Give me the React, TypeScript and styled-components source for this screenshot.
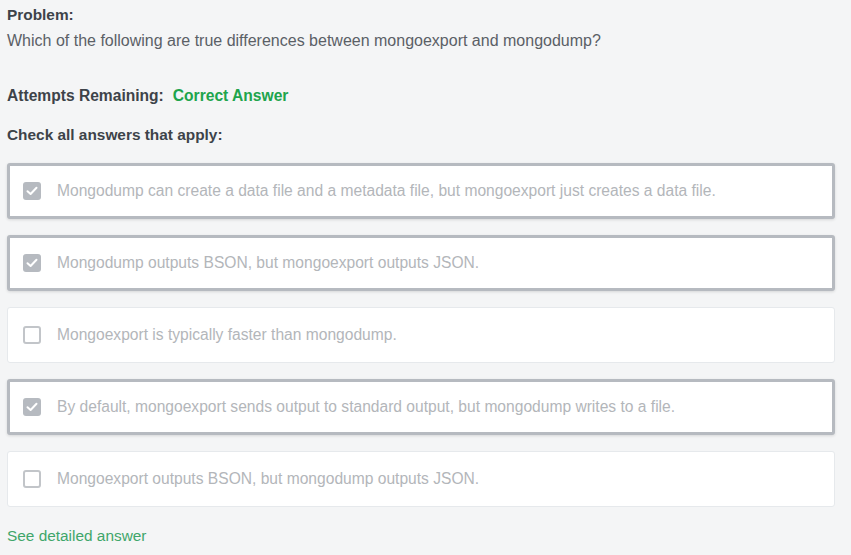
import React from 'react';
import styled, { createGlobalStyle } from 'styled-components';

const GlobalStyle = createGlobalStyle`
  html, body {
    margin: 0;
    padding: 0;
    background: #f4f5f6;
  }
  body {
    font-family: 'Liberation Sans', Arial, sans-serif;
  }
`;

const Page = styled.div`
  width: 851px;
  height: 555px;
  box-sizing: border-box;
  padding: 5px 16px 0 7px;
  overflow: hidden;
  color: #3d4349;
`;

const Label = styled.div`
  font-size: 15.4px;
  font-weight: bold;
  color: #3d4349;
  line-height: 20px;
`;

const Question = styled.div`
  font-size: 16px;
  color: #5b6066;
  line-height: 20px;
  margin-top: 6px;
`;

const Attempts = styled.div`
  display: flex;
  gap: 9px;
  margin-top: 35px;
  font-size: 15.6px;
  font-weight: bold;
  line-height: 20px;
`;

const Correct = styled.span`
  color: #20a44c;
`;

const Instruction = styled(Label)`
  margin-top: 19px;
`;

const List = styled.div`
  display: flex;
  flex-direction: column;
  gap: 16px;
  margin-top: 18px;
`;

const Option = styled.div<{ $checked: boolean }>`
  display: flex;
  align-items: center;
  gap: 16px;
  height: 56px;
  box-sizing: border-box;
  padding-left: ${(p) => (p.$checked ? '13px' : '15px')};
  background: #fff;
  border: ${(p) => (p.$checked ? '3px solid #b6bac0' : '1px solid #e6e9ec')};
  border-radius: 3px;
  box-shadow: ${(p) => (p.$checked ? '0 1px 3px rgba(0,0,0,0.12)' : 'none')};
`;

const Box = styled.span<{ $checked: boolean }>`
  flex: none;
  width: 18px;
  height: 18px;
  box-sizing: border-box;
  border-radius: 3px;
  display: flex;
  align-items: center;
  justify-content: center;
  background: ${(p) => (p.$checked ? '#b6bac0' : '#fff')};
  border: ${(p) => (p.$checked ? 'none' : '2px solid #c2c5c9')};
`;

const OptionText = styled.span`
  font-size: 15.6px;
  color: #b3b6ba;
  line-height: 20px;
`;

const DetailLink = styled.a`
  display: block;
  margin-top: 19px;
  font-size: 15.4px;
  color: #3fa66a;
  text-decoration: none;
  line-height: 20px;
`;

const options = [
  { text: 'Mongodump can create a data file and a metadata file, but mongoexport just creates a data file.', checked: true },
  { text: 'Mongodump outputs BSON, but mongoexport outputs JSON.', checked: true },
  { text: 'Mongoexport is typically faster than mongodump.', checked: false },
  { text: 'By default, mongoexport sends output to standard output, but mongodump writes to a file.', checked: true },
  { text: 'Mongoexport outputs BSON, but mongodump outputs JSON.', checked: false },
];

const Check = () => (
  <svg width="12" height="10" viewBox="0 0 12 10">
    <path d="M1.5 5.2 L4.6 8 L10.5 1.8" fill="none" stroke="#fff" strokeWidth="2" strokeLinecap="round" strokeLinejoin="round" />
  </svg>
);

export default function App() {
  return (
    <Page>
      <GlobalStyle />
      <Label>Problem:</Label>
      <Question>Which of the following are true differences between mongoexport and mongodump?</Question>
      <Attempts>
        <span>Attempts Remaining:</span>
        <Correct>Correct Answer</Correct>
      </Attempts>
      <Instruction>Check all answers that apply:</Instruction>
      <List>
        {options.map((o) => (
          <Option key={o.text} $checked={o.checked}>
            <Box $checked={o.checked}>{o.checked && <Check />}</Box>
            <OptionText>{o.text}</OptionText>
          </Option>
        ))}
      </List>
      <DetailLink href="#">See detailed answer</DetailLink>
    </Page>
  );
}
